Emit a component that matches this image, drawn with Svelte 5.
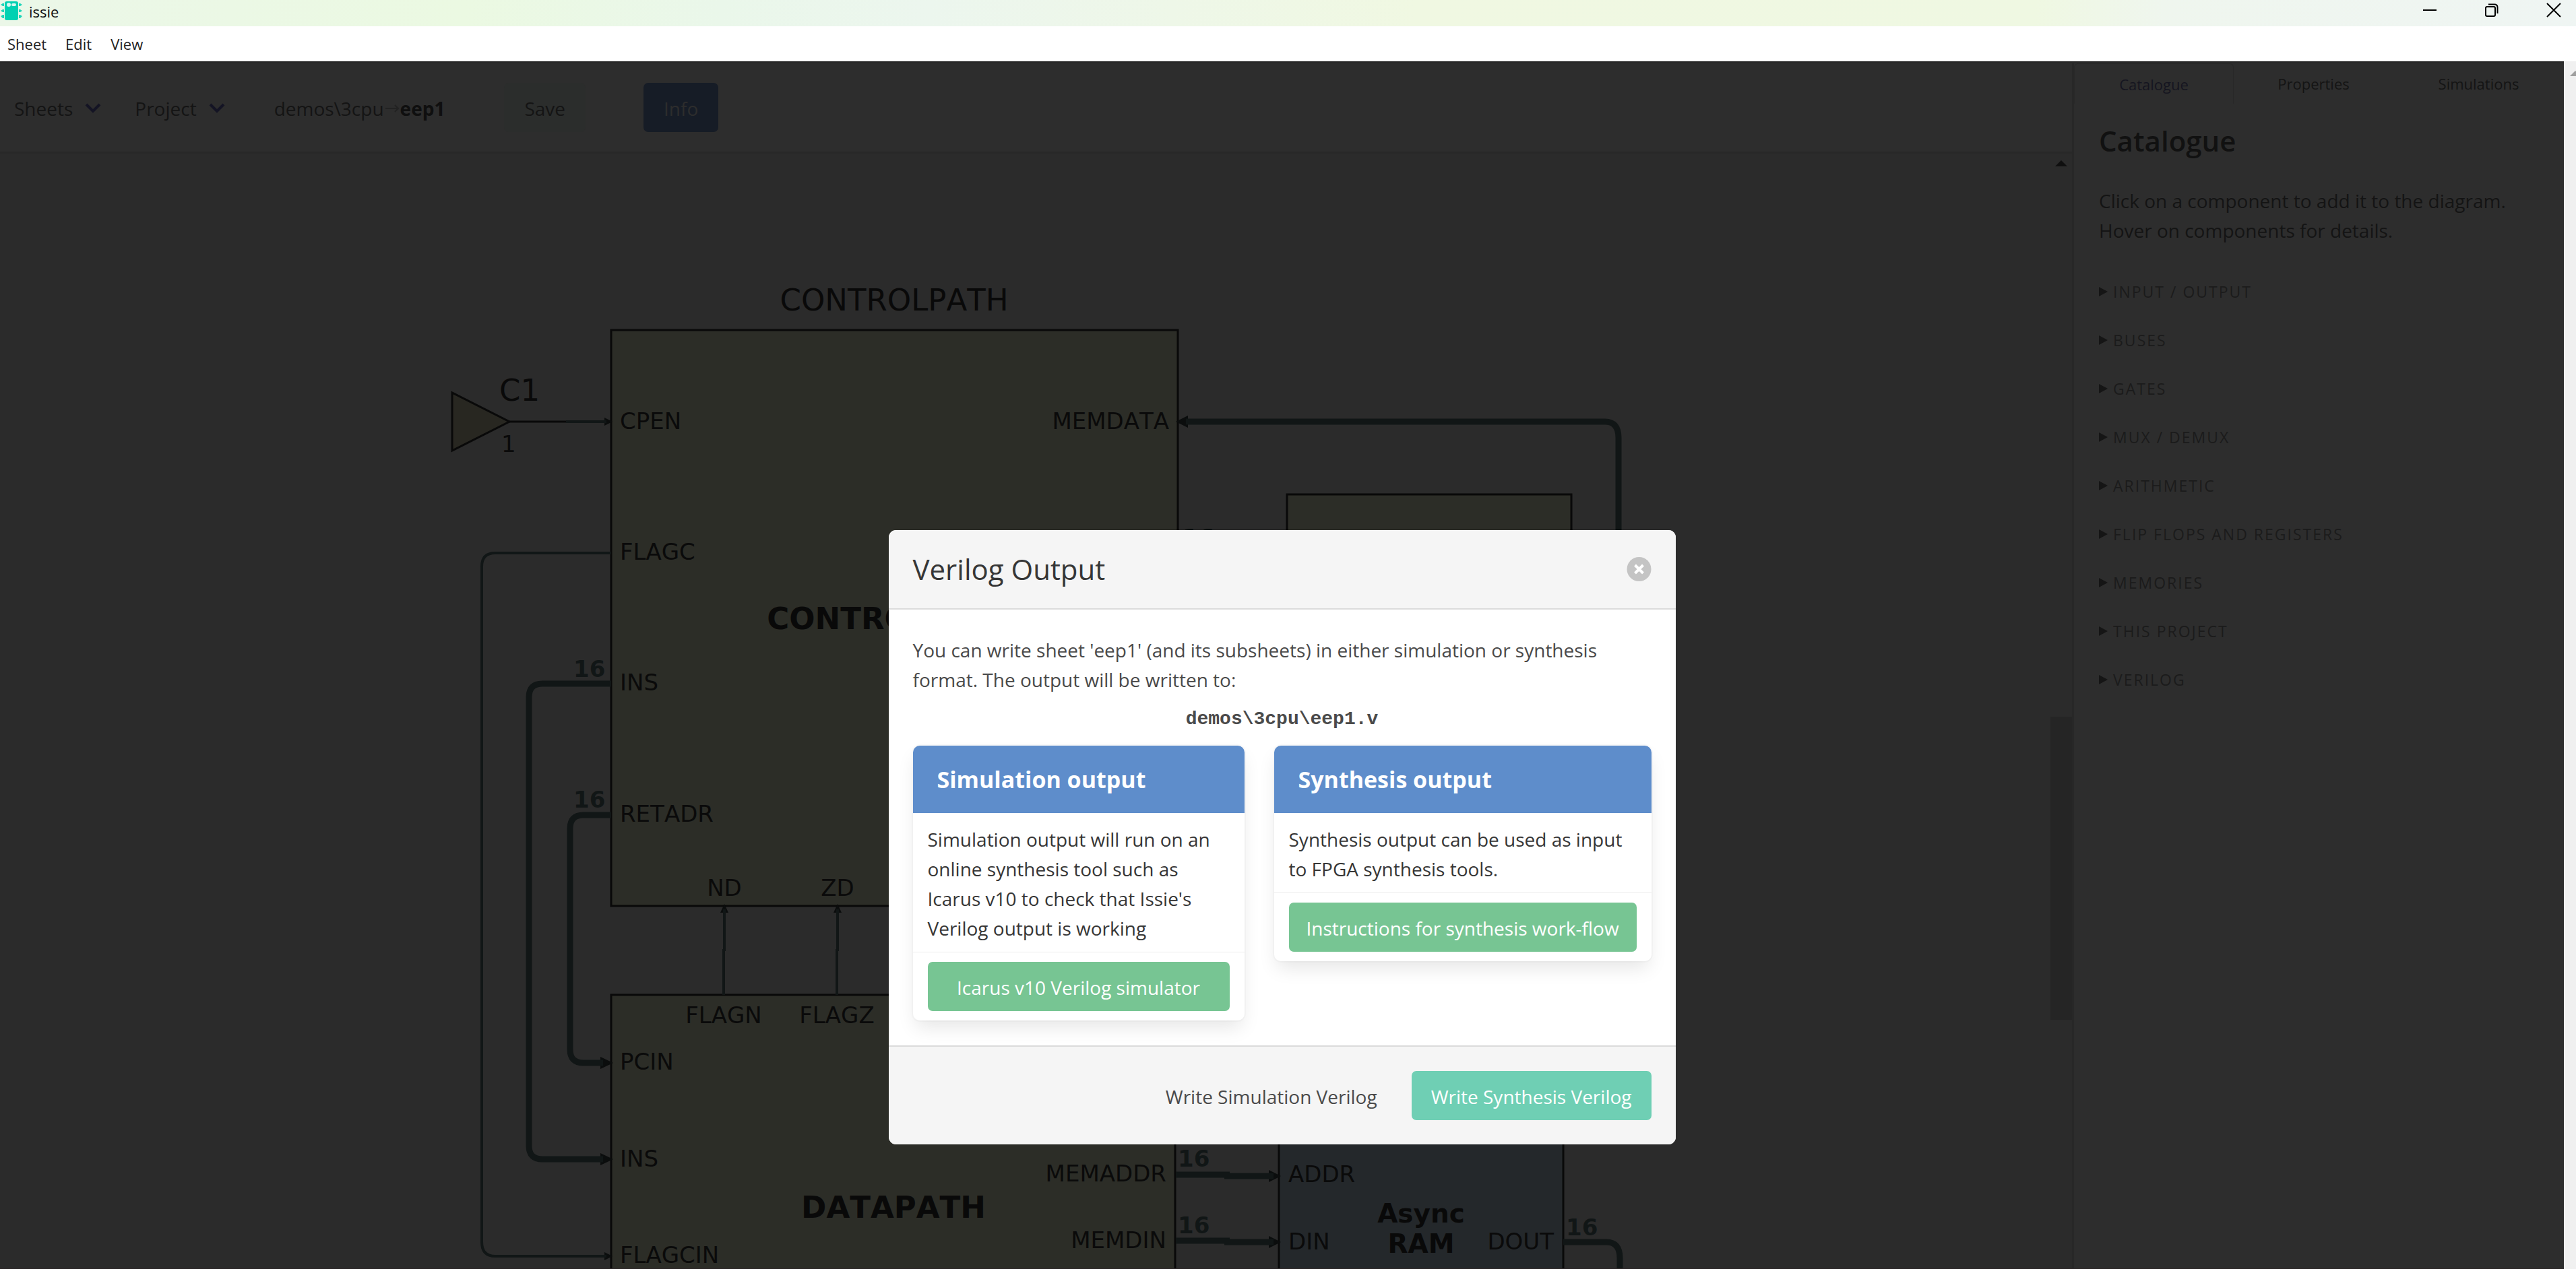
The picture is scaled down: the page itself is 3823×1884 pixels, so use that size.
<script>
  const menus = ['Sheet', 'Edit', 'View'];
  const tabs = ['Catalogue', 'Properties', 'Simulations'];
  const groups = ['Input / Output', 'Buses', 'Gates', 'Mux / Demux', 'Arithmetic', 'Flip Flops and Registers', 'Memories', 'This Project', 'Verilog'];
  const wide = [
    'M907 1015H805Q785 1015 785 1035V1701Q785 1721 805 1721H895',
    'M907 1210H866Q846 1210 846 1230V1558Q846 1578 866 1578H895',
    'M1760 626H2382Q2402 626 2402 650V1300',
    'M1745 1744H1825', 'M1817 1746H1890',
    'M1745 1842H1825', 'M1817 1844H1890',
    'M2320 1844H2384Q2404 1844 2404 1868V1890'
  ];
  const thin = [
    'M840 626H900',
    'M907 821H735Q715 821 715 841V1844Q715 1865 735 1865H900',
    'M1074 1477V1409', 'M1075 1412V1350', 'M1242 1477V1409', 'M1243 1412V1350'
  ];
  const heads = [
    'M897 620L909 626L897 632Z', 'M897 1859L909 1865L897 1871Z',
    'M1069 1355L1075 1342L1081 1355Z', 'M1237 1355L1243 1342L1249 1355Z',
    'M891 1569L910 1578L891 1587Z', 'M891 1712L910 1721L891 1730Z',
    'M1763 617L1745 626L1763 635Z', 'M1883 1737L1901 1746L1883 1755Z', 'M1883 1835L1901 1844L1883 1853Z'
  ];
  const ports = [
    ['CPEN', 920, 637, 'start'], ['FLAGC', 920, 831, 'start'], ['INS', 920, 1025, 'start'], ['RETADR', 920, 1220, 'start'],
    ['MEMDATA', 1735, 637, 'end'], ['ND', 1075, 1330, 'middle'], ['ZD', 1243, 1330, 'middle'],
    ['FLAGN', 1074, 1519, 'middle'], ['FLAGZ', 1242, 1519, 'middle'],
    ['PCIN', 920, 1588, 'start'], ['INS', 920, 1732, 'start'], ['FLAGCIN', 920, 1875, 'start'],
    ['MEMADDR', 1731, 1754, 'end'], ['MEMDIN', 1731, 1853, 'end'],
    ['ADDR', 1912, 1755, 'start'], ['DIN', 1912, 1855, 'start'], ['DOUT', 2306, 1855, 'end'], ['1', 744, 671, 'start']
  ];
  const widths = [[851, 1005], [851, 1199], [1755, 810], [1748, 1732], [1748, 1831], [2324, 1834]];
</script>

<div class="window">
  <header class="titlebar">
    <div class="brand">
      <svg class="logo" viewBox="0 0 34 30" aria-hidden="true">
        <rect x="7" y="2" width="20" height="28" rx="3" fill="#00d1b2" />
        <path d="M6 5H4L1 7 4 9H6ZM6 14H4L1 16 4 18H6ZM6 22H4L1 24 4 27H6ZM28 5H30L33 7 30 9H28ZM28 14H30L33 16 30 18H28ZM28 22H30L33 24 30 27H28Z" fill="#1fd6ba" />
        <circle cx="13" cy="7" r="3" fill="#d6f7f0" /><rect x="17" y="5" width="7" height="4" rx="2" fill="#d6f7f0" />
      </svg>
      <span>issie</span>
    </div>
    <div class="controls">
      <button aria-label="Minimise"><svg viewBox="0 0 20 20"><path d="M0 10H20" /></svg></button>
      <button aria-label="Restore"><svg viewBox="0 0 20 20"><rect x="1" y="5" width="14" height="14" rx="2" /><path d="M5 1.500H14Q18.500 1.500 18.500 6V15" /></svg></button>
      <button aria-label="Close window"><svg viewBox="0 0 20 20"><path d="M0 0 20 20M20 0 0 20" /></svg></button>
    </div>
  </header>
  <nav class="menubar">
    {#each menus as m}<button>{m}</button>{/each}
  </nav>

  <div class="app">
    <main class="workspace">
      <div class="editor">
        <div class="toolbar">
          <button class="drop">Sheets <svg viewBox="0 0 24 16"><path d="M2 2 12 12 22 2" /></svg></button>
          <button class="drop">Project <svg viewBox="0 0 24 16"><path d="M2 2 12 12 22 2" /></svg></button>
          <div class="crumb">demos\3cpu<svg class="arrow" viewBox="0 0 22 12"><path d="M1 6H20M15 1 20 6 15 11" /></svg><b>eep1</b></div>
          <button class="save">Save</button>
          <button class="info">Info</button>
        </div>
        <div class="canvas">
          <svg class="diagram" role="img" aria-label="Schematic">
            <g transform="translate(0 -228)">
              <g class="blocks">
                <rect x="907" y="490" width="841" height="855" />
                <rect x="907" y="1477" width="837" height="440" />
                <rect x="1910" y="734" width="422" height="500" />
                <rect class="ram" x="1898" y="1600" width="422" height="320" />
                <path class="constant" d="M671 583V669L756 626Z" /><path d="M756 626H842" />
              </g>
              <g class="heads">{#each heads as d}<path {d} />{/each}</g>
              <g class="thin">{#each thin as d}<path {d} />{/each}</g>
              <g class="wide">{#each wide as d}<path {d} />{/each}</g>
              <g class="ports">{#each ports as [t, x, y, a]}<text {x} {y} text-anchor={a}>{t}</text>{/each}</g>
              <g class="widths">{#each widths as [x, y]}<text {x} {y}>16</text>{/each}</g>
              <g class="names">
                <text x="1327" y="461" text-anchor="middle">CONTROLPATH</text>
                <text x="741" y="595">C1</text>
                <text class="strong" x="1327" y="934" text-anchor="middle">CONTROLPATH</text>
                <text class="strong" x="1326" y="1808" text-anchor="middle">DATAPATH</text>
                <text class="strong mid" x="2109" y="1815" text-anchor="middle">Async</text>
                <text class="strong mid" x="2109" y="1860" text-anchor="middle">RAM</text>
              </g>
            </g>
          </svg>
          <div class="track"><i class="up"></i><i class="thumb"></i></div>
        </div>
      </div>
      <aside>
        <div class="tabs">
          {#each tabs as t, i}<button class:active={i === 0}>{t}</button>{/each}
        </div>
        <section class="catalogue">
          <h1>Catalogue</h1>
          <p>Click on a component to add it to the diagram.<br />Hover on components for details.</p>
          <ul>
            {#each groups as g}<li><button><i></i>{g}</button></li>{/each}
          </ul>
        </section>
      </aside>
      <div class="shade">
        <div class="modal" role="dialog" aria-labelledby="dialog-title">
          <header>
            <h2 id="dialog-title">Verilog Output</h2>
            <button class="close" aria-label="Close"><svg viewBox="0 0 36 36"><circle cx="18" cy="18" r="18" /><path d="M12 12 24 24M24 12 12 24" /></svg></button>
          </header>
          <div class="body">
            <p>You can write sheet 'eep1' (and its subsheets) in either simulation or synthesis<br />format. The output will be written to:</p>
            <code>demos\3cpu\eep1.v</code>
            <div class="cards">
              <article>
                <h3>Simulation output</h3>
                <p>Simulation output will run on an<br />online synthesis tool such as<br />Icarus v10 to check that Issie's<br />Verilog output is working</p>
                <div class="action"><button>Icarus v10 Verilog simulator</button></div>
              </article>
              <article>
                <h3>Synthesis output</h3>
                <p>Synthesis output can be used as input<br />to FPGA synthesis tools.</p>
                <div class="action"><button>Instructions for synthesis work-flow</button></div>
              </article>
            </div>
          </div>
          <footer>
            <button class="plain">Write Simulation Verilog</button>
            <button class="primary">Write Synthesis Verilog</button>
          </footer>
        </div>
      </div>
    </main>
    <div class="scroll"><i></i></div>
  </div>
</div>

<style>
  :global(body) { background: #2c2c2c; }
  * { box-sizing: border-box; }
  .window {
    display: flex; flex-direction: column; height: 100vh; overflow: hidden;
    font: 28px/44px "Open Sans", "Noto Sans", sans-serif; color: #141414;
  }
  button { font: inherit; color: inherit; background: none; border: 0; padding: 0; margin: 0; white-space: nowrap; }
  h1, h2, h3, p, ul { margin: 0; padding: 0; }
  svg { display: block; }

  .titlebar {
    display: flex; justify-content: space-between; flex: none; height: 39px;
    background: linear-gradient(90deg, #ebf7e8, #ebf9e2 18%, #eaf7ea 28%, #ecf6ee 36%, #f0f8e2 55%, #eff8e2 79%, #eff6ee 84%, #eff5f3);
    color: #111; font-size: 22px; line-height: 34px;
  }
  .brand { display: flex; gap: 9px; }
  .logo { width: 34px; height: 30px; }
  .controls { display: flex; gap: 72px; padding: 5px 23px 0 0; }
  .controls button { width: 20px; height: 20px; }
  .controls svg { width: 20px; height: 20px; fill: none; stroke: #000; stroke-width: 2; overflow: visible; }
  .menubar { display: flex; gap: 28px; flex: none; height: 52px; padding-left: 11px; background: #fff; font-size: 22px; line-height: 50px; color: #222; }

  .app { display: flex; flex: 1; min-height: 0; }
  .scroll { width: 18px; background: #f0f0f0; overflow: hidden; padding: 14px 0 0 9px; }
  .scroll i { display: block; width: 0; border: 8px solid transparent; border-top: 0; border-bottom: 8px solid #a0a0a0; }
  .workspace { position: relative; display: flex; flex: 1; min-width: 0; background: #2d2d2d; border-top: 3px solid #282828; border-bottom: 1px solid #292425; }
  .editor { display: flex; flex-direction: column; flex: 1; min-width: 0; }
  .toolbar { display: flex; align-items: center; flex: none; height: 134px; border-bottom: 3px solid #282828; padding-left: 21px; }
  .drop { display: flex; align-items: center; gap: 18px; margin-right: 50px; padding-top: 3px; }
  .drop svg { width: 24px; height: 16px; fill: none; stroke: #141424; stroke-width: 4; }
  .crumb { display: flex; align-items: center; margin-left: 23px; padding-top: 3px; color: #141414; }
  .crumb b { color: #0f0f0f; }
  .arrow { width: 24px; height: 12px; fill: none; stroke: #222; stroke-width: 2; }
  .save, .info { height: 73px; border-radius: 7px; padding: 3px 30px 0; }
  .save { margin-left: 88px; background: #2b2d2c; }
  .info { margin-left: 86px; background: #161c26; color: #2d2d2d; }
  .canvas { display: flex; flex: 1; min-height: 0; background: #2b2b2b; }
  .diagram { flex: 1; min-width: 0; height: 100%; overflow: hidden; font-family: Verdana, "DejaVu Sans", sans-serif; font-kerning: none; }
  .blocks { fill: #2c2d27; stroke: #090909; stroke-width: 3; }
  .ram { fill: #24282b; }
  .constant { fill: #282721; }
  .thin, .wide { fill: none; stroke: #111616; stroke-width: 4; }
  .wide { stroke-width: 9; }
  .heads { fill: #0b0d0d; }
  .ports { font-size: 34px; fill: #0a0a0a; }
  .widths { font-size: 34px; font-weight: 700; fill: #111616; }
  .names { font-size: 45px; fill: #090909; }
  .strong { font-weight: 700; }
  .mid { font-size: 39px; }
  .track { display: flex; flex-direction: column; width: 32px; flex: none; }
  .track i { display: block; }
  .up { width: 0; margin: 10px 7px 0; border: 9px solid transparent; border-top: 0; border-bottom: 9px solid #0f0f0f; }
  .thumb { margin-top: 817px; height: 450px; background: #252525; }

  aside { flex: none; width: 730px; border-left: 3px solid #272727; }
  .tabs { display: grid; grid-template-columns: 237px 237px 1fr; overflow: hidden; height: 60px; font-size: 22px; line-height: 60px; }
  .tabs button { border-bottom: 1px solid #262626; }
  .tabs .active { color: #151520; border: 1px solid #282828; border-bottom: 0; border-radius: 6px 6px 0 0; }
  .catalogue { padding: 28px 37px; }
  h1 { font-size: 42px; line-height: 54px; font-weight: 600; color: #111; }
  .catalogue p { margin-top: 40px; white-space: nowrap; }
  ul { margin-top: 47px; list-style: none; }
  li { height: 72px; }
  li button { display: flex; align-items: center; gap: 8px; font-size: 23px; letter-spacing: 2px; text-transform: uppercase; color: #1b1b1b; }
  li i { border: 7px solid transparent; border-right: 0; border-left: 13px solid #151515; }

  .shade { position: absolute; inset: 0; display: flex; align-items: flex-start; justify-content: center; padding-top: 693px; }
  .modal { width: 1168px; border-radius: 11px; overflow: hidden; background: #fff; color: #4a4a4a; }
  .modal header { display: flex; align-items: center; justify-content: space-between; height: 118px; padding: 0 36px; background: #f5f5f5; border-bottom: 2px solid #dbdbdb; }
  h2 { font-size: 42px; line-height: 44px; font-weight: 400; color: #363636; }
  .close svg { width: 37px; height: 36px; fill: #c4c4c4; }
  .close path { stroke: #fff; stroke-width: 4; }
  .body { padding: 38px 36px 37px; }
  .body > p { white-space: nowrap; }
  code { display: block; margin: 16px 0 18px; font: 700 28px/42px "Courier New", "Liberation Mono", monospace; text-align: center; }
  .cards { display: flex; align-items: flex-start; gap: 44px; }
  article { flex: 492 1 0; min-width: 0; border-radius: 10px; background: #fff; box-shadow: 0 14px 28px -4px rgba(10, 10, 10, .1), 0 0 0 2px rgba(10, 10, 10, .02); }
  article:last-child { flex-grow: 560; }
  h3 { padding: 0 36px; border-radius: 10px 10px 0 0; font-size: 34px; line-height: 100px; font-weight: 700; color: #fff; background: #5e8dcb; }
  article p { padding: 17px 22px 13px; color: #363636; white-space: nowrap; }
  .action { padding: 14px 22px; border-top: 1px solid #ededed; }
  .action button { width: 100%; height: 73px; padding-top: 2px; border-radius: 7px; background: #77c593; color: #fff; }
  footer { display: flex; justify-content: flex-end; align-items: center; gap: 22px; height: 147px; padding: 0 36px; background: #f5f5f5; border-top: 2px solid #dbdbdb; }
  footer button { height: 73px; padding: 2px 29px 0; border-radius: 7px; }
  .primary { background: #6fcfb4; color: #fff; }
</style>
